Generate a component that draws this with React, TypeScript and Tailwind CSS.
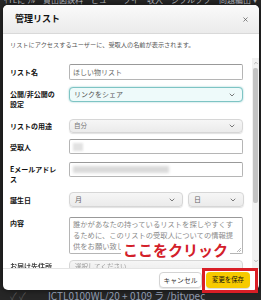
import { ChevronDown, ChevronUp, X } from "lucide-react";

const Chevron = () => <ChevronDown size={8} strokeWidth={2.6} className="shrink-0 text-[#666]" />;

function Label({ children }: { children: React.ReactNode }) {
  return <div className="w-[59px] shrink-0 pt-[3px] text-[7px] font-bold leading-[10px] text-[#111]">{children}</div>;
}

export default function App() {
  return (
    <div className="relative h-[300px] w-[261px] overflow-hidden bg-[#262626] font-['Noto_Sans_CJK_JP','Noto_Sans',sans-serif]">
      {/* page behind the modal */}
      <div className="h-[5px] overflow-hidden whitespace-nowrap pl-[4px] text-[8px] leading-[8px] text-[#a9adb3]">
        <div className="-mt-[4px]">ｲTLに ﾌﾙ　貸出図鉄料　ビュー　ブイ　収入　ジブルブブ　問題編出 ▾　年</div>
      </div>

      <div className="ml-[3px] flex h-[285px] w-[256px] flex-col overflow-hidden rounded-[5px] bg-white shadow-[0_0_6px_rgba(0,0,0,0.6)]">
        {/* header */}
        <div className="flex h-[29px] shrink-0 items-center justify-between border-b border-[#d9d9d9] bg-linear-to-b from-[#fafafa] to-[#ebebeb] pl-[12px] pr-[10px]">
          <span className="text-[9px] font-bold text-[#111]">管理リスト</span>
          <X size={7} strokeWidth={2.4} className="text-[#555]" />
        </div>

        <div className="h-[24px] shrink-0 pl-[7px] pt-[6px] text-[6.2px] leading-[10px] text-[#555]">
          リストにアクセスするユーザーに、受取人の名前が表示されます。
        </div>

        {/* scrolling form */}
        <div className="flex h-[210px] shrink-0 overflow-hidden">
          <div className="flex w-[248px] flex-col pl-[7px] pt-[6px]">
            <div className="flex h-[23px] shrink-0 items-start">
              <Label>リスト名</Label>
              <div className="flex h-[16px] w-[174px] items-center rounded-[2px] border border-[#b5b5b5] border-t-[#999] bg-white pl-[3px] text-[7px] text-[#666]">
                ほしい物リスト
              </div>
            </div>

            <div className="flex h-[32px] shrink-0 items-start">
              <div className="w-[59px] shrink-0 pt-[2px] text-[7px] font-bold leading-[10px] text-[#111]">
                公開/非公開の
                <br />
                設定
              </div>
              <div className="flex h-[15px] w-[174px] items-center justify-between rounded-[4px] border border-[#7ec4c4] bg-[#eefafa] pl-[4px] pr-[6px] text-[7px] text-[#555] shadow-[0_0_2px_rgba(0,140,140,0.45)]">
                リンクをシェア
                <Chevron />
              </div>
            </div>

            <div className="flex h-[20px] shrink-0 items-start">
              <div className="w-[59px] shrink-0 pt-[2px] text-[7px] font-bold leading-[10px] text-[#111]">リストの用途</div>
              <div className="flex h-[14px] w-[174px] items-center justify-between rounded-[4px] border border-[#d6d6d6] bg-linear-to-b from-[#f6f6f6] to-[#ebebeb] pl-[4px] pr-[6px] text-[6.5px] text-[#777] shadow-[0_1px_1px_rgba(0,0,0,0.12)]">
                自分
                <Chevron />
              </div>
            </div>

            <div className="flex h-[23px] shrink-0 items-start">
              <Label>受取人</Label>
              <div className="flex h-[15px] w-[174px] items-center rounded-[2px] border border-[#b5b5b5] border-t-[#999] bg-white pl-[3px]">
                <div className="h-[8px] w-[10px] bg-[#e2e2e2] blur-[1px]" />
              </div>
            </div>

            <div className="flex h-[30px] shrink-0 items-start">
              <div className="w-[59px] shrink-0 pt-[2px] text-[7px] font-bold leading-[10px] text-[#111]">
                Eメールアドレ
                <br />ス
              </div>
              <div className="flex h-[15px] w-[174px] items-center rounded-[2px] border border-[#b5b5b5] border-t-[#999] bg-white pl-[3px]">
                <div className="h-[7px] w-[96px] bg-[#dadada] blur-[1.5px]" />
              </div>
            </div>

            <div className="flex h-[25px] shrink-0 items-start">
              <div className="w-[59px] shrink-0 pt-[3px] text-[7px] font-bold leading-[10px] text-[#111]">誕生日</div>
              <div className="flex gap-[5px]">
                <div className="flex h-[15px] w-[114px] items-center justify-between rounded-[4px] border border-[#d6d6d6] bg-linear-to-b from-[#f6f6f6] to-[#ebebeb] pl-[5px] pr-[6px] text-[7px] text-[#666] shadow-[0_1px_1px_rgba(0,0,0,0.12)]">
                  月
                  <Chevron />
                </div>
                <div className="flex h-[15px] w-[56px] items-center justify-between rounded-[4px] border border-[#d6d6d6] bg-linear-to-b from-[#f6f6f6] to-[#ebebeb] pl-[5px] pr-[6px] text-[7px] text-[#666] shadow-[0_1px_1px_rgba(0,0,0,0.12)]">
                  日
                  <Chevron />
                </div>
              </div>
            </div>

            <div className="flex h-[43px] shrink-0 items-start">
              <div className="w-[59px] shrink-0 pt-[1px] text-[7px] font-bold leading-[10px] text-[#111]">内容</div>
              <div className="relative h-[37px] w-[174px] overflow-hidden rounded-[2px] border border-[#b5b5b5] border-t-[#999] bg-white px-[3px] pt-[1px] text-[7.3px] leading-[11px] text-[#8a8a8a]">
                誰かがあなたの持っているリストを探しやすくするために、このリストの受取人についての情報提供をお願い致します。
                <svg className="absolute bottom-[1px] right-[1px]" width="5" height="5" viewBox="0 0 5 5">
                  <path d="M5 1 L1 5 M5 3 L3 5" stroke="#999" strokeWidth="0.7" />
                </svg>
              </div>
            </div>

            <div className="flex h-[15px] shrink-0 items-start">
              <div className="w-[59px] shrink-0 pt-[1px] text-[7px] font-bold leading-[10px] text-[#444] blur-[0.5px]">お届け先住所</div>
              <div className="flex h-[14px] w-[174px] items-center rounded-[4px] border border-[#d6d6d6] bg-linear-to-b from-[#f6f6f6] to-[#ebebeb] pl-[5px] text-[6.5px] text-[#999] blur-[0.4px]">
                選択してください
              </div>
            </div>
          </div>

          {/* scrollbar */}
          <div className="ml-[1px] flex h-[210px] w-[7px] flex-col items-center bg-[#f1f1f1]">
            <ChevronUp size={6} strokeWidth={3} className="mt-[2px] text-[#a3a3a3]" />
            <div className="mt-[2px] h-[135px] w-[5px] rounded-[2px] bg-[#c3c3c3]" />
            <div className="flex-1" />
            <ChevronDown size={6} strokeWidth={3} className="mb-[4px] text-[#a3a3a3]" />
          </div>
        </div>

        {/* footer */}
        <div className="flex h-[22px] shrink-0 items-start justify-end gap-[4px] border-t border-[#e4e4e4] pr-[9px] pt-[3px]">
          <div className="flex h-[16px] w-[43px] items-center justify-center rounded-[4px] border border-[#d3d3d3] bg-white text-[6.8px] text-[#333] shadow-[0_1px_1px_rgba(0,0,0,0.1)]">
            キャンセル
          </div>
          <div className="flex h-[16px] w-[44px] items-center justify-center rounded-[4px] bg-[#f7ca00] text-[6.4px] text-[#111] shadow-[0_1px_1px_rgba(0,0,0,0.15)]">
            変更を保存
          </div>
        </div>
      </div>

      {/* page behind, below modal */}
      <div className="flex items-start whitespace-nowrap pl-[10px] pt-[1px] text-[10px] leading-[10px] text-[#8f9bb0]">
        <span className="text-[#555]">✓ ✓</span>
        <span className="ml-[22px]">ICTL0100WL/20 + 0109 ラ /bjtypec</span>
      </div>

      {/* annotation overlays */}
      <div className="absolute left-[121px] top-[241px] bg-white px-[2px] text-[15px] font-bold leading-[17px] text-[#d3202a]">
        ここをクリック
      </div>
      <div className="absolute left-[202px] top-[268px] h-[25px] w-[56px] border-[3px] border-[#d91e26]" />
    </div>
  );
}
